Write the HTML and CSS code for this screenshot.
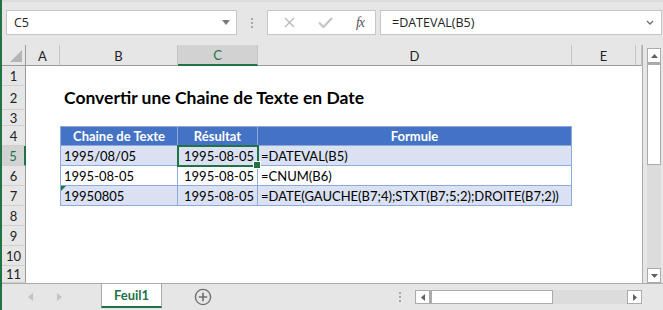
FILE: index.html
```html
<!DOCTYPE html>
<html>

<head>
    <meta charset="UTF-8">
    <title>Convertir une Chaine de Texte en Date</title>
    <link rel="stylesheet" href="styles.css">
</head>

<body>
    <div class="app">
        <div class="toolbar">
            <div class="namebox">
                <span>C5</span>
                <svg class="caret" width="8" height="5" viewBox="0 0 8 5"><path d="M0 0h8L4 5z" fill="#7a7a7a"/></svg>
            </div>
            <div class="grip"><i></i><i></i><i></i></div>
            <div class="fxbox">
                <svg width="11" height="11" viewBox="0 0 11 11"><path d="M1 1l9 9M10 1l-9 9" stroke="#b9b9b9" stroke-width="1.4" fill="none"/></svg>
                <svg width="15" height="11" viewBox="0 0 15 11"><path d="M1 5.5l4.5 4.5L14 1" stroke="#c4c4c4" stroke-width="2.2" fill="none"/></svg>
                <span class="fx">fx</span>
            </div>
            <div class="formula">
                <span>=DATEVAL(B5)</span>
                <svg width="8" height="5" viewBox="0 0 8 5"><path d="M1 1l3 3 3-3" stroke="#6d6d6d" stroke-width="1.3" fill="none"/></svg>
            </div>
        </div>

        <div class="sheet">
            <div class="grid">
                <div class="corner"><svg width="12" height="12" viewBox="0 0 12 12"><path d="M12 0v12H0z" fill="#b5b5b5"/></svg></div>
                <div class="ch">A</div>
                <div class="ch">B</div>
                <div class="ch sel">C</div>
                <div class="ch">D</div>
                <div class="ch">E</div>
                <div class="ch"></div>

                <div class="rh">1</div><div class="blank"></div>

                <div class="rh">2</div><div></div>
                <div class="title">Convertir une Chaine de Texte en Date</div>
                <div class="rest"></div>

                <div class="rh">3</div><div class="blank"></div>

                <div class="rh">4</div><div></div>
                <div class="td th first">Chaine de Texte</div>
                <div class="td th">Résultat</div>
                <div class="td th">Formule</div>
                <div class="rest"></div>

                <div class="rh sel">5</div><div></div>
                <div class="td band first">1995/08/05</div>
                <div class="td band num active">1995-08-05</div>
                <div class="td band">=DATEVAL(B5)</div>
                <div class="rest"></div>

                <div class="rh">6</div><div></div>
                <div class="td first">1995-08-05</div>
                <div class="td num">1995-08-05</div>
                <div class="td">=CNUM(B6)</div>
                <div class="rest"></div>

                <div class="rh">7</div><div></div>
                <div class="td band first err">19950805</div>
                <div class="td band num">1995-08-05</div>
                <div class="td band">=DATE(GAUCHE(B7;4);STXT(B7;5;2);DROITE(B7;2))</div>
                <div class="rest"></div>

                <div class="rh">8</div><div class="blank"></div>
                <div class="rh">9</div><div class="blank"></div>
                <div class="rh">10</div><div class="blank"></div>
                <div class="rh">11</div><div class="blank"></div>
            </div>

            <div class="vscroll">
                <div class="sbtn"><svg width="7" height="4" viewBox="0 0 7 4"><path d="M0 4h7L3.5 0z" fill="#606060"/></svg></div>
                <div class="vthumb"></div>
                <div class="track"></div>
                <div class="sbtn"><svg width="7" height="4" viewBox="0 0 7 4"><path d="M0 0h7L3.5 4z" fill="#606060"/></svg></div>
            </div>
        </div>

        <div class="tabbar">
            <div class="tabnav">
                <svg width="5" height="8" viewBox="0 0 5 8"><path d="M5 0v8L0 4z" fill="#c3c3c3"/></svg>
                <svg width="5" height="8" viewBox="0 0 5 8"><path d="M0 0v8l5-4z" fill="#c3c3c3"/></svg>
            </div>
            <div class="tab">Feuil1</div>
            <div class="newtab">
                <svg width="18" height="18" viewBox="0 0 18 18"><circle cx="9" cy="9" r="7.6" stroke="#6f6f6f" stroke-width="1.4" fill="none"/><path d="M9 4.8v8.4M4.8 9h8.4" stroke="#6f6f6f" stroke-width="1.6"/></svg>
            </div>
            <div class="grip hgrip"><i></i><i></i><i></i></div>
            <div class="hscroll">
                <div class="sbtn"><svg width="4" height="7" viewBox="0 0 4 7"><path d="M4 0v7L0 3.5z" fill="#606060"/></svg></div>
                <div class="hthumb"></div>
                <div class="track"></div>
                <div class="sbtn"><svg width="4" height="7" viewBox="0 0 4 7"><path d="M0 0v7l4-3.5z" fill="#606060"/></svg></div>
            </div>
        </div>
    </div>
</body>

</html>
```

FILE: styles.css
```css
* {
    box-sizing: border-box;
}

body {
    margin: 0;
    font-family: Lato, "Liberation Sans", sans-serif;
    font-size: 13px;
    color: #000;
}

.app {
    width: 663px;
    height: 310px;
    display: flex;
    flex-direction: column;
    background: #e6e6e6;
    border-left: 2px solid #217346;
    overflow: hidden;
}

/* barre de formule */

.toolbar {
    height: 45px;
    flex: none;
    display: flex;
    align-items: flex-start;
    padding: 8px 0 0 4px;
    border-top: 2px solid #dcdcdc;
}

.namebox,
.fxbox,
.formula {
    height: 25px;
    background: #fff;
    border: 1px solid #c6c6c6;
    display: flex;
    align-items: center;
}

.namebox {
    width: 231px;
    padding: 0 6px 0 7px;
    justify-content: space-between;
    font-family: "Open Sans", sans-serif;
    font-size: 12.5px;
    color: #222;
}

.grip {
    display: flex;
    flex-direction: column;
    gap: 2px;
    margin: 8px 14px 0 14px;
}

.grip i {
    width: 2px;
    height: 2px;
    background: #a8a8a8;
}

.fxbox {
    width: 109px;
    padding: 0 11px 0 16px;
    justify-content: space-between;
}

.fx {
    font-family: "Liberation Serif", serif;
    font-style: italic;
    font-size: 14px;
    color: #555;
    letter-spacing: -1px;
}

.formula {
    flex: 1;
    margin-left: 4px;
    margin-right: 1px;
    padding: 0 7px 0 11px;
    justify-content: space-between;
    font-family: "Open Sans", sans-serif;
    font-size: 12.5px;
    color: #222;
}

/* feuille */

.sheet {
    flex: 1;
    display: flex;
    overflow: hidden;
}

.grid {
    display: grid;
    grid-template-columns: 24px 34px 118px 80px 314px 64px 6px;
    grid-template-rows: 21px 20px 24px 16px repeat(7, 20px);
    background: #fff;
    border-right: 1px solid #ababab;
    align-self: flex-start;
}

.corner,
.ch {
    background: #e6e6e6;
    border-bottom: 1px solid #9b9b9b;
}

.corner {
    border-right: 1px solid #9b9b9b;
    display: flex;
    align-items: flex-end;
    justify-content: flex-end;
    padding: 0 3px 3px 0;
}

.ch {
    border-right: 1px solid #c4c4c4;
    display: flex;
    align-items: center;
    justify-content: center;
    color: #222;
    padding-top: 1px;
}

.ch.sel {
    background: #d2d2d2;
    color: #217346;
    border-bottom: 2px solid #217346;
}

.rh {
    background: #e6e6e6;
    border-right: 1px solid #9b9b9b;
    border-bottom: 1px solid #d0d0d0;
    display: flex;
    align-items: center;
    justify-content: center;
    color: #222;
}

.rh.sel {
    background: #d2d2d2;
    color: #217346;
    border-right: 2px solid #217346;
}

.blank {
    grid-column: span 6;
}

.rest {
    grid-column: span 2;
}

.title {
    grid-column: span 3;
    display: flex;
    align-items: flex-end;
    padding: 0 0 2px 4px;
    font-size: 17.5px;
    font-weight: 700;
    white-space: nowrap;
}

/* tableau */

.td {
    position: relative;
    display: flex;
    align-items: center;
    padding: 0 3px;
    white-space: nowrap;
    border-right: 1px solid #8eaadb;
    border-bottom: 1px solid #8eaadb;
}

.td.first {
    border-left: 1px solid #8eaadb;
}

.th {
    background: #4472c4;
    color: #fff;
    font-weight: 700;
    justify-content: center;
    border-top: 1px solid #8eaadb;
}

.band {
    background: #d9e1f2;
}

.num {
    justify-content: flex-end;
}

.active {
    outline: 2px solid #217346;
    outline-offset: -1px;
    z-index: 1;
}

.active::after {
    content: "";
    position: absolute;
    right: -4px;
    bottom: -4px;
    width: 6px;
    height: 6px;
    background: #217346;
    border: 1px solid #fff;
}

.err::before {
    content: "";
    position: absolute;
    left: 0;
    top: 0;
    border-top: 5px solid #217346;
    border-right: 5px solid transparent;
}

/* barres de défilement */

.sbtn {
    flex: none;
    background: #fff;
    border: 1px solid #ababab;
    display: flex;
    align-items: center;
    justify-content: center;
}

.track {
    flex: 1;
    background: #dcdcdc;
}

.vscroll {
    width: 14px;
    margin: 3px 0 0 4px;
    display: flex;
    flex-direction: column;
}

.vscroll .sbtn {
    height: 15px;
}

.vthumb {
    height: 102px;
    background: #fff;
    border: 1px solid #ababab;
    border-top-width: 2px;
}

/* onglets */

.tabbar {
    height: 27px;
    flex: none;
    display: flex;
    align-items: flex-start;
    border-top: 1px solid #ababab;
}

.tabnav {
    width: 99px;
    height: 26px;
    display: flex;
    align-items: center;
    gap: 24px;
    padding-left: 26px;
}

.tab {
    width: 61px;
    height: 24px;
    background: #fff;
    border-left: 1px solid #ababab;
    border-right: 1px solid #ababab;
    border-bottom: 2px solid #217346;
    display: flex;
    align-items: center;
    justify-content: center;
    color: #217346;
    font-weight: 700;
}

.newtab {
    margin: 4px 0 0 32px;
    height: 18px;
}

.hgrip {
    margin: 8px 0 0 187px;
}

.hscroll {
    width: 227px;
    height: 14px;
    margin: 6px 0 0 14px;
    display: flex;
}

.hscroll .sbtn {
    width: 15px;
}

.hthumb {
    width: 123px;
    background: #fff;
    border: 1px solid #ababab;
    border-left-width: 2px;
}
```
